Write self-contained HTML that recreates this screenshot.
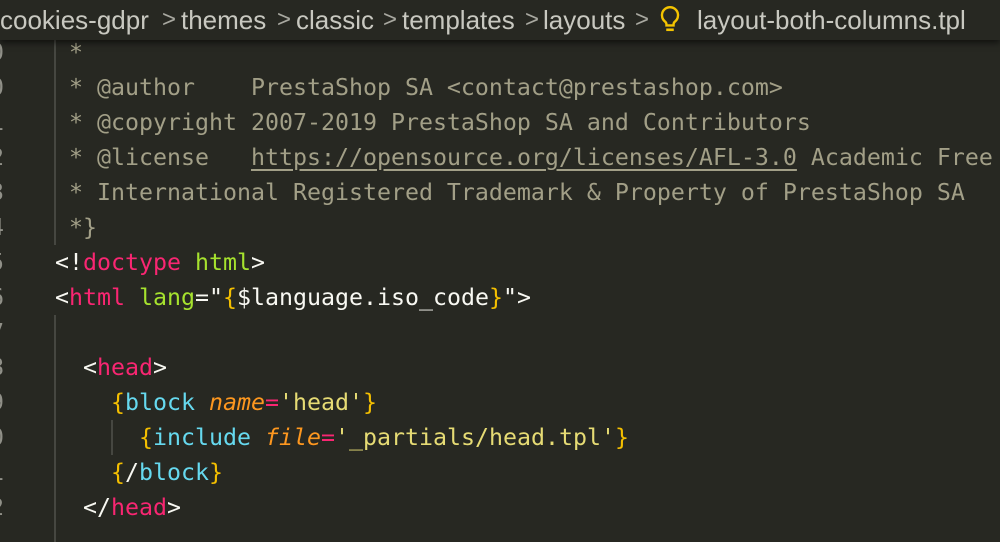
<!DOCTYPE html>
<html><head><style>
body{margin:0;width:1000px;height:542px;overflow:hidden;background:#272822;position:relative;font-family:"DejaVu Sans Mono",monospace;}
.bc{position:absolute;left:0;top:0;width:1000px;height:40px;background:#272822;box-shadow:0 3px 6px rgba(0,0,0,0.55);z-index:2;font-family:"Liberation Sans",sans-serif;font-size:26px;color:#c8c8c0;line-height:40px;white-space:nowrap;}
.bc span{position:absolute;top:0}
.bc .s{color:#a8a8a0;font-size:24px}
.ln{position:absolute;left:0;font-size:23.25px;line-height:35px;white-space:pre;color:#f8f8f2;}
.num{position:absolute;left:-10px;color:#909088;font-size:23.25px;line-height:35px;}
.c{color:#a29f87}.p{color:#f92672}.g{color:#a6e22e}.y{color:#e6db74}.b{color:#66d9ef}.o{color:#fd971f;font-style:italic}.br{color:#f4bf00}
.u{text-decoration:underline;text-underline-offset:4px}
.guide{position:absolute;width:2px;background:#464741;}
</style></head><body>
<div class="bc"><span style="left:0">cookies-gdpr</span><span class="s" style="left:162px">&gt;</span><span style="left:181px">themes</span><span class="s" style="left:277px">&gt;</span><span style="left:296px">classic</span><span class="s" style="left:383px">&gt;</span><span style="left:402px">templates</span><span class="s" style="left:525px">&gt;</span><span style="left:543px">layouts</span><span class="s" style="left:635px">&gt;</span><svg width="24" height="28" viewBox="0 0 22 26" style="position:absolute;left:658px;top:5px"><path d="M11 2a7.5 7.5 0 0 0-4.5 13.5c.8.7 1.2 1.6 1.2 2.6V19h6.6v-.9c0-1 .4-1.9 1.2-2.6A7.5 7.5 0 0 0 11 2z" fill="none" stroke="#f4c400" stroke-width="2.2"/><path d="M7.5 23h7" stroke="#f4c400" stroke-width="2.4"/></svg><span style="left:697px">layout-both-columns.tpl</span></div>
<div class="guide" style="left:54px;top:35px;height:210px"></div>
<div class="guide" style="left:54px;top:315px;height:227px"></div>
<div class="guide" style="left:111px;top:420px;height:35px"></div>
<div class="num" style="top:35px">0</div>
<div class="num" style="top:70px">0</div>
<div class="num" style="top:105px">1</div>
<div class="num" style="top:140px">2</div>
<div class="num" style="top:175px">3</div>
<div class="num" style="top:210px">4</div>
<div class="num" style="top:245px">5</div>
<div class="num" style="top:280px">6</div>
<div class="num" style="top:315px">7</div>
<div class="num" style="top:350px">8</div>
<div class="num" style="top:385px">9</div>
<div class="num" style="top:420px">0</div>
<div class="num" style="top:455px">1</div>
<div class="num" style="top:490px">2</div>
<div class="ln" style="top:35px;left:69px"><span class="c">*</span></div>
<div class="ln" style="top:70px;left:69px"><span class="c">* @author    PrestaShop SA &lt;contact@prestashop.com&gt;</span></div>
<div class="ln" style="top:105px;left:69px"><span class="c">* @copyright 2007-2019 PrestaShop SA and Contributors</span></div>
<div class="ln" style="top:140px;left:69px"><span class="c">* @license   <span class="u">https://opensource.org/licenses/AFL-3.0</span> Academic Free</span></div>
<div class="ln" style="top:175px;left:69px"><span class="c">* International Registered Trademark &amp; Property of PrestaShop SA</span></div>
<div class="ln" style="top:210px;left:69px"><span class="c">*}</span></div>
<div class="ln" style="top:245px;left:55px">&lt;!<span class="p">doctype</span> <span class="g">html</span>&gt;</div>
<div class="ln" style="top:280px;left:55px">&lt;<span class="p">html</span> <span class="g">lang</span>="<span class="br">{</span>$language.iso_code<span class="br">}</span>"&gt;</div>
<div class="ln" style="top:350px;left:83px">&lt;<span class="p">head</span>&gt;</div>
<div class="ln" style="top:385px;left:111px"><span class="br">{</span><span class="b">block</span> <span class="o">name</span><span class="p">=</span><span class="y">'head'</span><span class="br">}</span></div>
<div class="ln" style="top:420px;left:139px"><span class="br">{</span><span class="b">include</span> <span class="o">file</span><span class="p">=</span><span class="y">'_partials/head.tpl'</span><span class="br">}</span></div>
<div class="ln" style="top:455px;left:111px"><span class="br">{</span>/<span class="b">block</span><span class="br">}</span></div>
<div class="ln" style="top:490px;left:83px">&lt;/<span class="p">head</span>&gt;</div>
</body></html>
